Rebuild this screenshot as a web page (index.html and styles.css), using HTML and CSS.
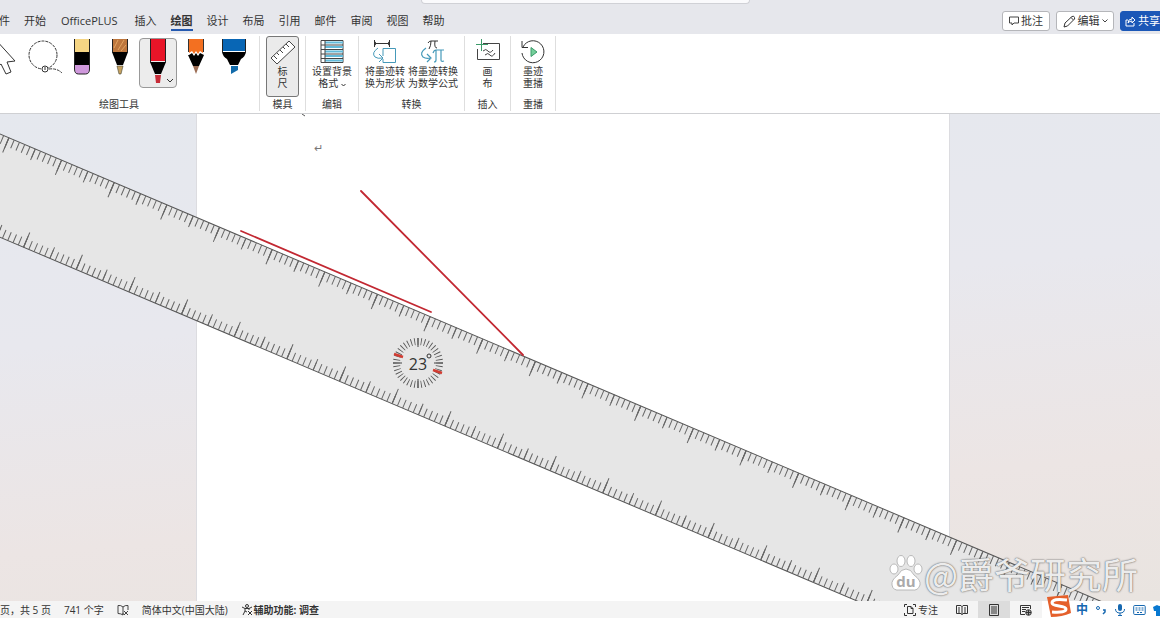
FILE: index.html
```html
<!DOCTYPE html>
<html lang="zh-CN">
<head>
<meta charset="utf-8">
<title>绘图</title>
<link rel="stylesheet" href="styles.css">
</head>
<body>
<div class="app">
  <header class="titlebar">
    <div class="search"></div>
    <div class="tabrow">
      <nav class="tabs">
        <a href="#">文件</a><a href="#">开始</a><a href="#" class="plus">OfficePLUS</a><a href="#">插入</a><a href="#" class="active">绘图</a><a href="#">设计</a><a href="#">布局</a><a href="#">引用</a><a href="#">邮件</a><a href="#">审阅</a><a href="#">视图</a><a href="#">帮助</a>
      </nav>
      <div class="actions">
        <button class="action"><svg width="10" height="10" viewBox="0 0 10 10"><path d="M.5 1h9v6H5L3 9V7H.5z" fill="none" stroke="#444"/></svg>批注</button>
        <button class="action edit"><svg width="13" height="13" viewBox="0 0 13 13"><path d="M1 12l1-4 7-6.500q2-1 2.500 1T11 4.500L4.500 11zM8 2.500L10.500 5" fill="none" stroke="#333"/></svg>编辑<svg width="6" height="4" viewBox="0 0 6 4"><path d="M.5.5L3 3 5.500.5" fill="none" stroke="#444"/></svg></button>
        <button class="action share"><svg width="11" height="11" viewBox="0 0 11 11"><path d="M3 4H1v6h8V7M3 7q0-4 4-4V1l3 3-3 3V5Q4.500 5 3 7z" fill="none" stroke="#fff"/></svg>共享</button>
      </div>
    </div>
  </header>

  <section class="ribbon">
    <div class="group draw">
      <div class="tools">
        <button class="tool" aria-label="选择"><svg width="38" height="38" viewBox="0 0 38 38"><path d="M8 1v30l6-5 5 10 5-2-4-10 8-1z" fill="#fff" stroke="#333"/></svg></button>
        <button class="tool" aria-label="套索"><svg width="38" height="38" viewBox="0 0 38 38"><circle cx="18" cy="17" r="14" fill="none" stroke="#333" stroke-dasharray="3 1"/><circle cx="20" cy="31" r="3" fill="#fff" stroke="#333"/><path d="M20 29v4M24 31q8-1 13 4" fill="none" stroke="#333" stroke-dasharray="3 1"/></svg></button>
        <button class="tool" aria-label="橡皮擦"><svg width="38" height="38" viewBox="0 0 38 38"><path d="M12 1h14v13H12z" fill="#f5d584"/><path d="M11 14h16v13H11z"/><path d="M12 27h14v5q0 4-3 4h-8q-3 0-3-4z" fill="#cf98dc"/><path d="M11.500 1v30q0 5 4 5h7q4 0 4-5V1" fill="none" stroke="#222"/></svg></button>
        <button class="tool" aria-label="笔"><svg width="38" height="38" viewBox="0 0 38 38"><path d="M12 1h14v13H12z" fill="#bd763d"/><path d="M13 10l4-8m0 10l6-10m-3 11l5-6" stroke="#e4a562"/><path d="M11 14h16l-5 13h-6z"/><path d="M16 28h6l-2 8h-2z" fill="#c7a260" stroke="#443" stroke-width=".6"/><path d="M11.500 1v14m15 0V1" stroke="#222"/></svg></button>
        <button class="tool selected" aria-label="红色笔"><svg width="38" height="48" viewBox="0 0 38 48"><path d="M12 0h14v22H12z" fill="#e81528"/><path d="M11 23h16l-5 12h-6z"/><path d="M16 36h6l-1 8h-4z" fill="#c72c38"/><path d="M11.500 0v24m15 0V0" stroke="#222"/><path d="M28 40l3 3 3-3" fill="none" stroke="#333"/></svg></button>
        <button class="tool" aria-label="铅笔"><svg width="38" height="38" viewBox="0 0 38 38"><path d="M12 1h14v14l-3-2-2 3-2-3-2 3-2-3-3 2z" fill="#f37021"/><path d="M12 17l3-2 2 3 2-3 2 3 2-3 4 2-5 11h-6L11 17z"/><path d="M16 28h6l-3 8z" fill="#9b6c53"/><path d="M11.500 1v13m15 0V1" stroke="#333"/></svg></button>
        <button class="tool" aria-label="荧光笔"><svg width="38" height="38" viewBox="0 0 38 38"><path d="M8 1h22v12H8z" fill="#0866b5"/><path d="M7 14h24q-1 5-5 7l-3 6h-8l-3-6q-4-2-5-7z"/><path d="M16 28h7v4l-7 4z" fill="#126baa"/><path d="M7.500 1v13m23 0V1" stroke="#222"/></svg></button>
      </div>
      <div class="caption">绘图工具</div>
    </div>
    <div class="group stencil">
      <button class="command pressed"><svg width="26" height="26" viewBox="0 0 26 26"><path d="M1 19L19 2l6 6L7 25zM4 17l3 3M7 14l2 2M10 11l3 3M13 8l2 2M16 5l3 3" fill="#fff" stroke="#444"/></svg><span>标<br>尺</span></button>
      <div class="caption">模具</div>
    </div>
    <div class="group format">
      <button class="command"><svg width="26" height="26" viewBox="0 0 26 26"><path d="M2 1.500h22v22H2z" fill="#fff" stroke="#444"/><path d="M6 3.500h18M6 8h18M6 12.500h18M6 17h18M6 21.500h18" stroke="#61bada" stroke-width="2"/><path d="M2 6h22M2 10.500h22M2 15h22M2 19.500h22M6 1v22" stroke="#444"/></svg><span>设置背景<br>格式 <svg width="5" height="4" viewBox="0 0 5 4"><path d="M.5 1l2 2 2-2" fill="none" stroke="#333"/></svg></span></button>
      <div class="caption">编辑</div>
    </div>
    <div class="group convert">
      <div class="pair">
        <button class="command"><svg width="26" height="26" viewBox="0 0 26 26"><path d="M2 4.500h16M2.500 1v7M17.500 1v7M4 3L2 4.500 4 6M16 3l2 1.500L16 6" fill="none" stroke="#333"/><path d="M11 17V9.500h12.500v14H11V20M6 9q-7 5-3 9 3 2 7 1M7 15l4 4-4 4" fill="none" stroke="#4599b9"/></svg><span>将墨迹转<br>换为形状</span></button>
        <button class="command"><svg width="26" height="26" viewBox="0 0 26 26"><path d="M8 4q1-2 3-2h7M11 2q0 5-2 8M15 2q-1 7 2 7" fill="none" stroke="#333"/><path d="M6 9q-7 5-3 9 3 2 7 1M7 15l4 4-4 4M13 14q1-3 3-3h8M16 11v10q0 2-2 2M21 11v10q0 2 3 1" fill="none" stroke="#4599b9" stroke-width="1.200"/></svg><span>将墨迹转换<br>为数学公式</span></button>
      </div>
      <div class="caption">转换</div>
    </div>
    <div class="group insert">
      <button class="command"><svg width="26" height="26" viewBox="0 0 26 26"><path d="M8 4.500h16.500v16h-22V10" fill="none" stroke="#444"/><path d="M6.500 0v12M1 5.500h12" stroke="#3c9b6a"/><path d="M8 12q3-3 5 0t5-1M10 16q3-3 5 0t5-2" fill="none" stroke="#444"/></svg><span>画<br>布</span></button>
      <div class="caption">插入</div>
    </div>
    <div class="group replay">
      <button class="command"><svg width="26" height="26" viewBox="0 0 26 26"><path d="M3 8a11 11 0 1 1-1 6M2 2v6.500h6" fill="none" stroke="#333"/><path d="M11 8.500v9l6-4.500z" fill="#74cf9a" stroke="#3c9b6a"/></svg><span>墨迹<br>重播</span></button>
      <div class="caption">重播</div>
    </div>
  </section>

  <main class="workspace">
    <article class="sheet"><p>↵</p></article>
    <svg class="ink" width="100%" height="100%">
      <path d="M302 0l3 2" stroke="#555"/>
      <g transform="translate(0 20) rotate(23)">
        <rect x="-100" y="0" width="1600" height="95" fill="#e6e6e6" stroke="#555"/>
        <g stroke="#666" fill="none">
          <path d="M-48 4.500H1500" stroke-width="9" stroke-dasharray="1 4.720"/>
          <path d="M-48 6H1500" stroke-width="12" stroke-dasharray="1 27.600"/>
          <path d="M-48 8H1500" stroke-width="16" stroke-dasharray="1 56.200"/>
          <path d="M-49 90.500H1500" stroke-width="9" stroke-dasharray="1 4.720"/>
          <path d="M-49 89H1500" stroke-width="12" stroke-dasharray="1 27.600"/>
          <path d="M-49 87H1500" stroke-width="16" stroke-dasharray="1 56.200"/>
        </g>
      </g>
      <g stroke="#c22832" stroke-width="1.800" stroke-linecap="round">
        <path d="M241 117L431 198M361 77L523 241"/>
      </g>
      <g transform="translate(418 249)">
        <circle r="21.500" fill="none" stroke="#555" stroke-width="7" pathLength="480" stroke-dasharray="3 9" stroke-dashoffset="1.500"/>
        <path d="M0-25v9M0 25v-9M-25 0h9M25 0h-9" stroke="#444"/>
        <path d="M-24-9l9 3M24 10l-9-3" stroke="#d23c32" stroke-width="2.500"/>
        <text class="angle" x="0" y="7" text-anchor="middle">23</text>
        <circle cx="11" cy="-7" r="2" fill="none" stroke="#333"/>
      </g>
    </svg>
    <div class="watermark">
      <svg width="36" height="40" viewBox="0 0 36 40"><g fill="#fff" stroke="#aaa" stroke-width=".8"><ellipse cx="6" cy="16" rx="4" ry="5"/><ellipse cx="13" cy="8" rx="4" ry="5.500"/><ellipse cx="23" cy="8" rx="4" ry="5.500"/><ellipse cx="30" cy="16" rx="4" ry="5"/><path d="M18 16q5 0 8 6 7 5 6 10-2 6-8 5H12q-7 1-8-5-1-5 6-10 3-6 8-6z"/></g><text class="du" x="18" y="34" text-anchor="middle">du</text></svg>
      <span>@爵爷研究所</span>
    </div>
  </main>

  <footer class="status">
    <div class="info">
      <span>页，共 5 页</span>
      <span>741 个字</span>
      <svg width="12" height="12" viewBox="0 0 12 12"><path d="M6 3Q4 1 1 1.500v8q3 0 5 1.500zM6 3q2-2 5-1.500V6M6 11V9M7 7l4 4M11 7l-4 4" fill="none" stroke="#444"/></svg>
      <span>简体中文(中国大陆)</span>
      <span class="access"><svg width="12" height="12" viewBox="0 0 12 12"><path d="M1 3l3 1.500h4L11 3M4 4.500V7l-2 4M8 4.500V6M4 7l2 1M7 7l4 4M11 7l-4 4" fill="none" stroke="#333"/><circle cx="6" cy="2" r="1.500" fill="none" stroke="#333"/></svg>辅助功能: 调查</span>
    </div>
    <div class="views">
      <button class="focus"><svg width="12" height="12" viewBox="0 0 12 12"><path d="M3 .5H.5V3M9 .5h2.500V3M.5 9v2.500H3M11.500 9v2.500H9M3.500 2.500H7l2 2v5H3.500zM7 2.500v2h2" fill="none" stroke="#333"/></svg>专注</button>
      <button aria-label="阅读视图"><svg width="12" height="12" viewBox="0 0 12 12"><path d="M.5 1.500H5l1 1 1-1h4.500v8H7l-1 1-1-1H.5zM6 2v9M2 4h2M2 6h2M2 8h2M8 4h2M8 6h2M8 8h2" fill="none" stroke="#333"/></svg></button>
      <button class="current" aria-label="页面视图"><svg width="12" height="12" viewBox="0 0 12 12"><path d="M1.500.5h9v11h-9zM3 3h6M3 5h6M3 7h6M3 9h6" fill="none" stroke="#333"/></svg></button>
      <button aria-label="Web 版式"><svg width="12" height="12" viewBox="0 0 12 12"><path d="M5 10.500H.5v-9h10V5M2 3.500h7M2 5.500h4M2 7.500h3" fill="none" stroke="#333"/><circle cx="8.500" cy="8.500" r="2.800" fill="#aaa" stroke="#333"/><path d="M6 8.500h5M8.500 6v5" stroke="#333"/></svg></button>
    </div>
    <div class="ime">
      <svg class="sogou" width="26" height="24" viewBox="0 0 26 24"><path d="M1 3L22 1l3 18q-9 4-20 4z" fill="#e5602b"/><path d="M21 6Q6 4 6 9q0 2 7 3t7 3q0 4-14 3" fill="none" stroke="#fff" stroke-width="3"/></svg>
      <span>中</span>
      <svg width="12" height="14" viewBox="0 0 12 14"><circle cx="3" cy="5" r="1.500" fill="none" stroke="#1768b0"/><path d="M8 7h2v2l-2 2" fill="none" stroke="#1768b0" stroke-width="1.500"/></svg>
      <svg width="12" height="14" viewBox="0 0 12 14"><rect x="4" y="1" width="4" height="7" rx="2" fill="#1768b0"/><path d="M1.500 6q0 4 4.500 4t4.500-4M6 10v3M4 12.500h4" fill="none" stroke="#1768b0"/></svg>
      <svg width="13" height="14" viewBox="0 0 13 14"><rect x=".7" y="2.500" width="11.500" height="9" rx="1" fill="none" stroke="#1768b0"/><path d="M2.500 5h8M2.500 7h8M4 9.500h5" stroke="#1768b0" stroke-dasharray="2 1"/></svg>
      <svg width="14" height="14" viewBox="0 0 14 14"><path d="M0 4l4-2q3 2 6 0l4 2-1.500 4H11v5H3V8H1z" fill="#0878d0"/></svg>
    </div>
  </footer>
</div>
</body>
</html>
```
FILE: styles.css
```css
* { box-sizing: border-box; }

body {
  margin: 0;
  overflow: hidden;
  color: #333;
  font-family: "Open Sans", "Noto Sans CJK SC", sans-serif;
  font-size: 10px;
}

button {
  margin: 0;
  padding: 0;
  border: 0;
  background: none;
  color: inherit;
  font: inherit;
}

svg { flex: none; }

.app {
  display: flex;
  flex-direction: column;
  height: 100vh;
  overflow: hidden;
}

.titlebar { padding-left: 10px; background: #e6e7ec; }

.search {
  width: 329px;
  height: 4px;
  margin: 0 auto;
  border: 1px solid #d0d1d6;
  border-top: 0;
  border-radius: 0 0 4px 4px;
  background: #fafafc;
}

.tabrow {
  display: flex;
  justify-content: space-between;
  height: 30px;
}

.tabs {
  display: flex;
  align-items: flex-end;
  margin-left: -29px;
  padding-bottom: 3px;
  font-size: 11px;
}

.tabs a {
  margin: 0 7px;
  border-bottom: 2px solid transparent;
  color: #333;
  line-height: 16px;
  text-decoration: none;
}

.tabs a.plus { margin: 0 10px 0 8px; }

.tabs a.active {
  border-color: #2459b0;
  font-weight: 700;
}

.actions {
  display: flex;
  align-items: center;
  gap: 6px;
  margin-right: -20px;
  padding-top: 4px;
  font-size: 11px;
}

.action {
  display: flex;
  align-items: center;
  justify-content: center;
  gap: 2px;
  width: 48px;
  height: 20px;
  border: 1px solid #b5b6ba;
  border-radius: 3px;
  background: #fff;
  line-height: 16px;
  white-space: nowrap;
}

.action.edit { width: 58px; }

.action.share {
  width: 60px;
  justify-content: flex-start;
  padding-left: 4px;
  border-color: #1b57b7;
  background: #1b57b7;
  color: #fff;
}

.ribbon {
  display: flex;
  height: 80px;
  padding: 2px 0;
  border-bottom: 1px solid #cfd0d3;
  background: #fff;
}

.group {
  display: flex;
  flex: none;
  flex-direction: column;
  align-items: center;
  justify-content: space-between;
  border-right: 1px solid #dedede;
}

.draw { width: 281px; margin-left: -21px; }
.stencil { width: 46px; }
.format { width: 53px; }
.convert { width: 106px; }
.insert { width: 46px; }
.replay { width: 45px; }

.tools { display: flex; align-items: flex-start; padding: 2px 0 0 2px; }

.tool {
  display: flex;
  justify-content: center;
  width: 38px;
  height: 50px;
}

.tool.selected {
  border: 1px solid #999;
  border-radius: 4px;
  background: #ececec;
}

.command {
  display: flex;
  flex-direction: column;
  align-items: center;
  height: 61px;
  padding-top: 3px;
  line-height: 12px;
  white-space: nowrap;
}

.command.pressed {
  width: 33px;
  padding-top: 2px;
  border: 1px solid #777;
  border-radius: 3px;
  background: #ebebeb;
}

.pair { display: flex; gap: 3px; }

.caption { line-height: 14px; }

.workspace {
  position: relative;
  display: flex;
  flex: 1;
  min-height: 0;
  overflow: hidden;
  background: linear-gradient(175deg, #e5e8ee 0%, #e8e8ee 40%, #ece5e4 75%, #e9e4e0 100%);
}

.sheet {
  flex: 1;
  margin: 0 210px 0 196px;
  padding: 25px 117px;
  border: solid #dcdce0;
  border-width: 0 1px;
  background: #fff;
}

.sheet p { margin: 0; color: #777; font-size: 11px; line-height: 18px; }

.ink { position: absolute; inset: 0; }

.angle { fill: #333; font-size: 16px; }

.watermark {
  position: absolute;
  right: 22px;
  bottom: 6px;
  display: flex;
  align-items: center;
  color: rgba(255, 255, 255, 0.9);
  font-family: "Noto Sans CJK SC", sans-serif;
  font-size: 36px;
  line-height: 44px;
  text-shadow: 0 0 2px #666, 0 0 1px #777;
}

.du {
  fill: #aaa;
  font-family: "Open Sans", sans-serif;
  font-size: 15px;
  font-weight: 700;
  text-shadow: none;
}

.status {
  display: flex;
  flex: none;
  height: 17px;
  background: #f4f4f4;
  line-height: 18px;
  white-space: nowrap;
}

.info {
  display: flex;
  flex: 1;
  align-items: center;
  gap: 13px;
}

.access { display: flex; align-items: center; gap: 1px; font-weight: 700; }

.views { display: flex; }

.views button {
  display: flex;
  align-items: center;
  justify-content: center;
  gap: 2px;
  width: 32px;
}

.views .focus { width: 50px; }
.views .current { background: #dcdcdc; }

.ime {
  display: flex;
  flex: none;
  align-items: center;
  gap: 7px;
  width: 118px;
  padding-left: 4px;
  background: #fff;
  color: #1768b0;
  font-size: 12px;
  font-weight: 700;
}

.sogou { align-self: flex-end; margin-right: -3px; position: relative; }
```
